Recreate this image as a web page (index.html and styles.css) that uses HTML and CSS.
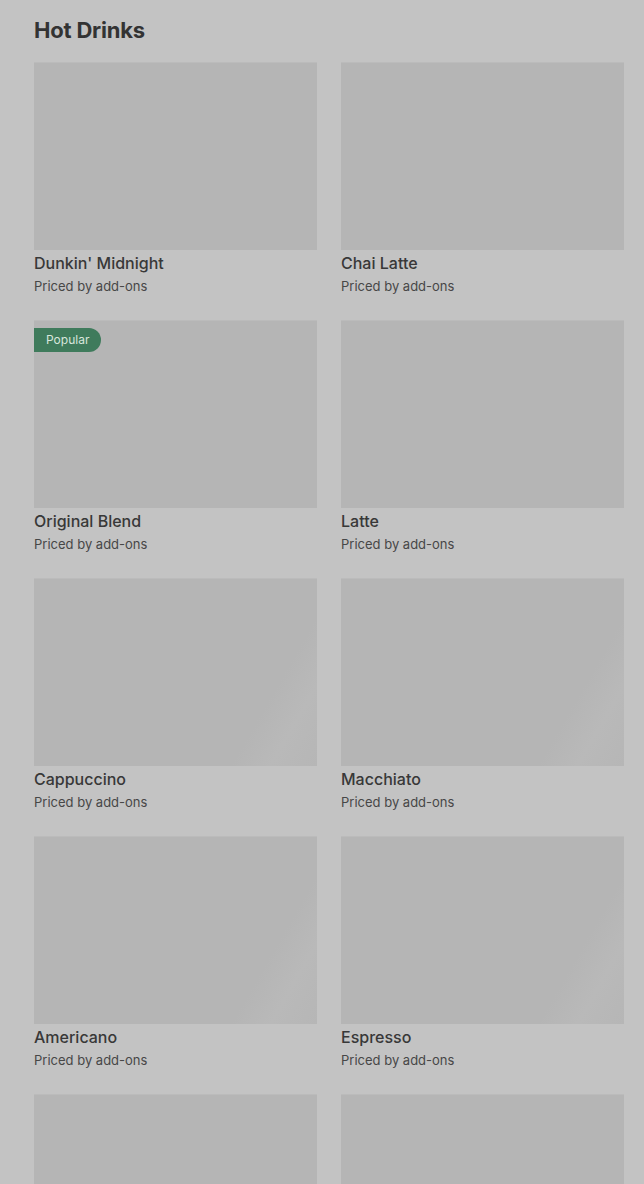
FILE: index.html
```html
<!DOCTYPE html>
<html>
<head>
    <link rel="stylesheet" href="styles.css">
</head>
<body>
    <section class="menu-section">
        <h1 class="section-title">Hot Drinks</h1>

        <div class="item-grid">
            <div class="item">
                <div class="item-image"></div>
                <div class="item-name">Dunkin' Midnight</div>
                <div class="item-price">Priced by add-ons</div>
            </div>
            <div class="item">
                <div class="item-image"></div>
                <div class="item-name">Chai Latte</div>
                <div class="item-price">Priced by add-ons</div>
            </div>

            <div class="item">
                <div class="item-image">
                    <span class="badge">Popular</span>
                </div>
                <div class="item-name">Original Blend</div>
                <div class="item-price">Priced by add-ons</div>
            </div>
            <div class="item">
                <div class="item-image"></div>
                <div class="item-name">Latte</div>
                <div class="item-price">Priced by add-ons</div>
            </div>

            <div class="item">
                <div class="item-image shimmer"></div>
                <div class="item-name">Cappuccino</div>
                <div class="item-price">Priced by add-ons</div>
            </div>
            <div class="item">
                <div class="item-image shimmer"></div>
                <div class="item-name">Macchiato</div>
                <div class="item-price">Priced by add-ons</div>
            </div>

            <div class="item">
                <div class="item-image shimmer"></div>
                <div class="item-name">Americano</div>
                <div class="item-price">Priced by add-ons</div>
            </div>
            <div class="item">
                <div class="item-image shimmer"></div>
                <div class="item-name">Espresso</div>
                <div class="item-price">Priced by add-ons</div>
            </div>

            <div class="item">
                <div class="item-image"></div>
            </div>
            <div class="item">
                <div class="item-image"></div>
            </div>
        </div>
    </section>
</body>
</html>
```

FILE: styles.css
```css
body {
    margin: 0;
    background-color: #c3c3c3;
    font-family: Inter, "Noto Sans", sans-serif;
    color: #3a3a3a;
}
.menu-section {
    padding: 16px 20px 0 34px;
}
.section-title {
    margin: 0 0 18px;
    font-size: 22px;
    line-height: 28px;
    font-weight: 700;
    letter-spacing: -0.2px;
    color: #333333;
}
.item-grid {
    display: grid;
    grid-template-columns: 283px 283px;
    column-gap: 24px;
    row-gap: 24px;
}
.item-image {
    position: relative;
    height: 187px;
    background-color: #b5b5b5;
    border-top: 1px solid #bbbbbb;
}
.item-image.shimmer {
    background-image: linear-gradient(120deg, #b5b5b5 0%, #b5b5b5 78%, #b9b9b9 88%, #b6b6b6 100%);
}
.item-name {
    margin-top: 3px;
    font-size: 16px;
    line-height: 20px;
    font-weight: 500;
    color: #383838;
}
.item-price {
    margin-top: 3px;
    font-size: 13px;
    line-height: 20px;
    color: #474747;
}
.badge {
    position: absolute;
    top: 7px;
    left: 0;
    height: 24px;
    padding: 0 12px;
    line-height: 24px;
    font-size: 12px;
    color: #d8e6dd;
    background-color: #3f7b5c;
    border-radius: 0 12px 12px 0;
}
```
